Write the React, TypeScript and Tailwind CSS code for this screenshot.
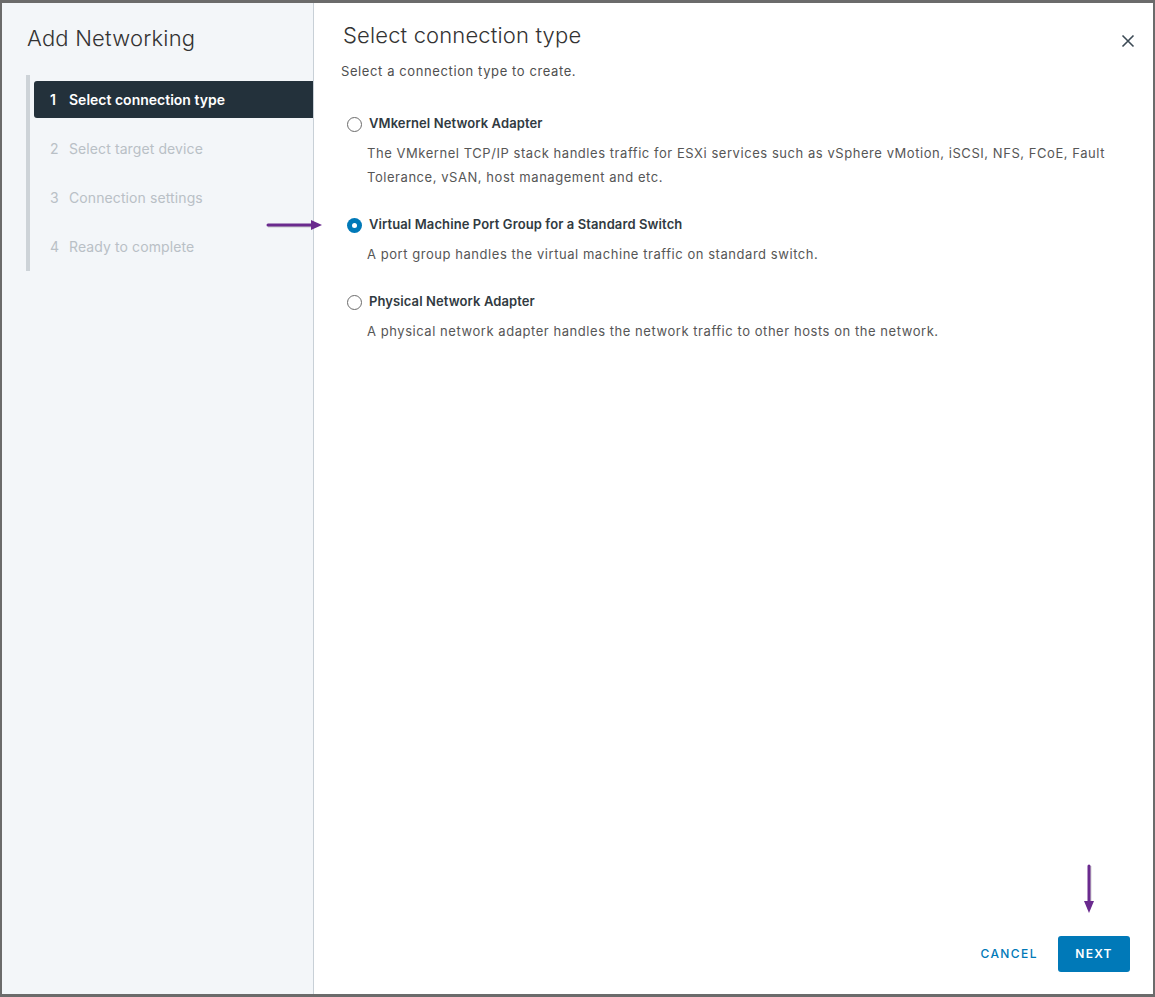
import React from "react";

const steps = [
  { n: 1, label: "Select connection type" },
  { n: 2, label: "Select target device" },
  { n: 3, label: "Connection settings" },
  { n: 4, label: "Ready to complete" },
];

const options = [
  {
    id: "vmkernel",
    title: "VMkernel Network Adapter",
    desc: "The VMkernel TCP/IP stack handles traffic for ESXi services such as vSphere vMotion, iSCSI, NFS, FCoE, Fault Tolerance, vSAN, host management and etc.",
  },
  {
    id: "portgroup",
    title: "Virtual Machine Port Group for a Standard Switch",
    desc: "A port group handles the virtual machine traffic on standard switch.",
  },
  {
    id: "physical",
    title: "Physical Network Adapter",
    desc: "A physical network adapter handles the network traffic to other hosts on the network.",
  },
];

function Radio({ checked }: { checked: boolean }) {
  if (checked) {
    return (
      <span className="w-[15px] h-[15px] rounded-full bg-[#0079b8] flex items-center justify-center shrink-0">
        <span className="w-[5px] h-[5px] rounded-full bg-white"></span>
      </span>
    );
  }
  return <span className="w-[15px] h-[15px] rounded-full border border-[#6b6b6b] bg-white shrink-0"></span>;
}

export default function App() {
  const selected = "portgroup";

  return (
    <div
      className="relative w-[1155px] h-[997px] bg-[#6b6b6b] pt-[3px] px-[2px] pb-[3px]"
      style={{ fontFamily: "Inter, 'Noto Sans', sans-serif" }}
    >
      <div className="flex h-full bg-white">
        {/* Sidebar steps */}
        <aside className="w-[312px] shrink-0 bg-[#f3f6f9] border-r border-[#c8d0d7]">
          <h2 className="pl-[25px] pt-[21px] text-[22px] leading-[28px] font-light tracking-[0.2px] text-[#333]">
            Add Networking
          </h2>
          <div className="mt-[23px] ml-[24px] border-l-4 border-[#cdd3d8] py-[6px] flex flex-col gap-[12px]">
            {steps.map((s) => (
              <div
                key={s.n}
                className={`ml-[4px] h-[37px] flex items-center pl-[16px] text-[14px] rounded-l-[3px] ${
                  s.n === 1 ? "bg-[#23313b] text-white font-semibold" : "text-[#b9c0c6] tracking-[0.1px]"
                }`}
              >
                <span className="w-[19px]">{s.n}</span>
                <span>{s.label}</span>
              </div>
            ))}
          </div>
        </aside>

        {/* Main content */}
        <main className="flex-1 flex flex-col pl-[27px] pr-[23px] pb-[22px]">
          <div className="flex items-start justify-between pt-[18px]">
            <h1 className="pl-[2px] text-[22px] leading-[28px] font-light tracking-[0.15px] text-[#333]">
              Select connection type
            </h1>
            <button className="mt-[12px] mr-[-6px] text-[#3c4a55]">
              <svg width="16" height="16" viewBox="0 0 16 16" fill="none" stroke="currentColor" strokeWidth="1.6">
                <path d="M2.5 2.5 L13.5 13.5 M13.5 2.5 L2.5 13.5" />
              </svg>
            </button>
          </div>
          <p className="mt-[13px] text-[13px] leading-[18px] tracking-[0.6px] text-[#4f4f4f]">
            Select a connection type to create.
          </p>

          <div className="flex flex-col">
            {options.map((o, i) => (
              <div key={o.id} className={i === 0 ? "mt-[35px]" : "mt-[27px]"}>
                <label className="flex items-center gap-[7px] pl-[6px] h-[18px]">
                  <Radio checked={o.id === selected} />
                  <span className="text-[13px] font-semibold tracking-[0.1px] text-[#313a41]">{o.title}</span>
                </label>
                <p className="mt-[8px] pl-[26px] max-w-[790px] text-[13px] leading-[24px] tracking-[0.55px] text-[#565656]">
                  {o.desc}
                </p>
              </div>
            ))}
          </div>

          <div className="flex-1"></div>

          <div className="flex items-center justify-end gap-[20px]">
            <button className="h-[36px] text-[12px] font-medium tracking-[0.12em] text-[#0079b8]">CANCEL</button>
            <button className="h-[36px] w-[72px] rounded-[3px] bg-[#0079b8] text-[12px] font-semibold tracking-[0.1em] text-white">
              NEXT
            </button>
          </div>
        </main>
      </div>

      {/* annotation arrows */}
      <svg className="absolute left-[264px] top-[216px]" width="62" height="18" viewBox="0 0 62 18">
        <path d="M4 10 H50" stroke="#7a7a7a" strokeOpacity="0.35" strokeWidth="3" />
        <path d="M4 9 H48" stroke="#6a2a8e" strokeWidth="3" strokeLinecap="round" />
        <path d="M47 4 L58 9 L47 14 Z" fill="#6a2a8e" />
      </svg>
      <svg className="absolute left-[1080px] top-[862px]" width="18" height="56" viewBox="0 0 18 56">
        <path d="M10 4 V42" stroke="#7a7a7a" strokeOpacity="0.35" strokeWidth="3" />
        <path d="M9 4 V40" stroke="#6a2a8e" strokeWidth="3" strokeLinecap="round" />
        <path d="M4 39 L9 51 L14 39 Z" fill="#6a2a8e" />
      </svg>
    </div>
  );
}
